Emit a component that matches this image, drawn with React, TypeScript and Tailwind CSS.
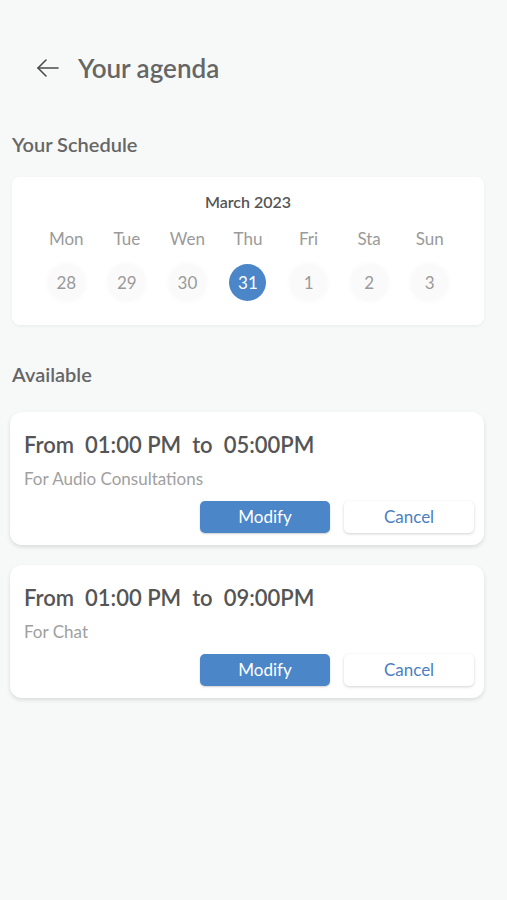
import React from "react";

const days = [
  { d: "Mon", n: "28" },
  { d: "Tue", n: "29" },
  { d: "Wen", n: "30" },
  { d: "Thu", n: "31", sel: true },
  { d: "Fri", n: "1" },
  { d: "Sta", n: "2" },
  { d: "Sun", n: "3" },
];

const slots = [
  { from: "01:00 PM", to: "05:00PM", kind: "For Audio Consultations" },
  { from: "01:00 PM", to: "09:00PM", kind: "For Chat" },
];

export default function App() {
  return (
    <div
      className="min-h-[900px] w-full bg-[#f7f9f9] pt-[56px] text-[#666]"
      style={{ fontFamily: "Lato, 'Open Sans', sans-serif" }}
    >
      <div className="flex items-center pl-[36px] h-[24px]">
        <svg width="24" height="20" viewBox="0 0 24 20" fill="none" stroke="#4a4a4a" strokeWidth="1.6" strokeLinecap="round" strokeLinejoin="round">
          <path d="M22 10H2" />
          <path d="M10 2L2 10l8 8" />
        </svg>
        <span className="ml-[18px] text-[26px] font-semibold leading-none text-[#666]">Your agenda</span>
      </div>

      <div className="px-[12px] pr-[23px]">
        <h2 className="mt-[54px] text-[20px] font-semibold leading-none text-[#666]">Your Schedule</h2>

        <div className="mt-[23px] rounded-[8px] bg-white shadow-[0_1px_3px_rgba(0,0,0,0.06)] px-[24px] pt-[17px] pb-[24px]">
          <div className="text-center text-[16px] font-semibold leading-none text-[#555]">March 2023</div>
          <div className="mt-[20px] grid grid-cols-7">
            {days.map((x) => (
              <div key={x.d} className="flex flex-col items-center">
                <span className="text-[17px] leading-none text-[#9a9a9a]">{x.d}</span>
                <span
                  className={
                    x.sel
                      ? "mt-[17px] flex h-[37px] w-[37px] items-center justify-center rounded-full bg-[#4a86c8] text-[17px] text-white"
                      : "mt-[17px] flex h-[37px] w-[37px] items-center justify-center rounded-full bg-[#fafafa] shadow-[0_0_4px_2px_#fbfbfb] text-[17px] text-[#9a9a9a]"
                  }
                >
                  {x.n}
                </span>
              </div>
            ))}
          </div>
        </div>

        <h2 className="mt-[39px] text-[20px] font-semibold leading-none text-[#666]">Available</h2>

        <div className="mt-[28px] flex flex-col gap-[20px] ml-[-2px]">
          {slots.map((s, i) => (
            <div
              key={i}
              className="rounded-[12px] bg-white pl-[14px] pr-[10px] pt-[22px] pb-[12px] shadow-[0_2px_4px_rgba(0,0,0,0.12)]"
            >
              <div className="text-[22px] font-semibold leading-none text-[#555] whitespace-pre">
                {`From  ${s.from}  to  ${s.to}`}
              </div>
              <div className="mt-[14px] text-[17px] leading-none text-[#a0a0a0]">{s.kind}</div>
              <div className="mt-[14px] flex justify-end gap-[14px]">
                <button className="h-[32px] w-[130px] rounded-[5px] bg-[#4a86c8] text-[17px] text-white shadow-[0_1px_2px_rgba(0,0,0,0.2)]">
                  Modify
                </button>
                <button className="h-[32px] w-[130px] rounded-[5px] bg-white text-[17px] text-[#4a7fc0] shadow-[0_1px_3px_rgba(0,0,0,0.18)]">
                  Cancel
                </button>
              </div>
            </div>
          ))}
        </div>
      </div>
    </div>
  );
}
